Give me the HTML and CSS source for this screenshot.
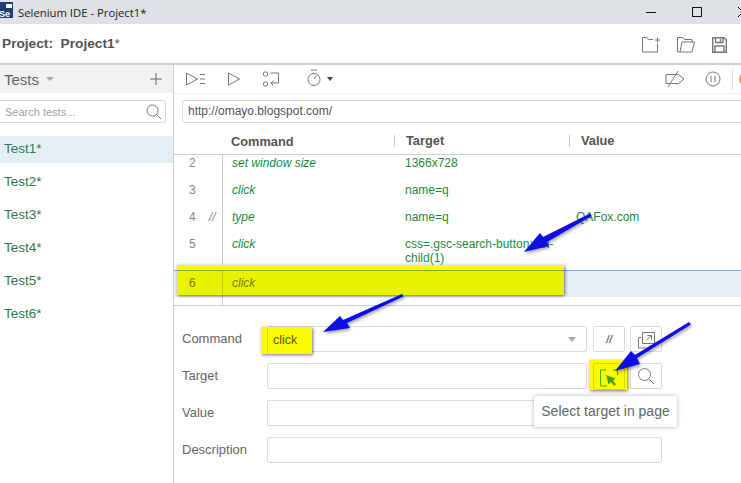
FILE: index.html
```html
<!DOCTYPE html>
<html lang="en">
<head>
<meta charset="utf-8">
<title>Selenium IDE - Project1*</title>
<link rel="stylesheet" href="styles.css">
</head>
<body>
<div class="app">
  <header class="titlebar">
    <svg class="logo" width="13" height="16" viewBox="0 0 13 16"><rect width="13" height="16" fill="#1f3f7a"/><rect x="6" y="2" width="6" height="4" fill="#fff"/><text x="-1" y="14.500" class="logo-text">Se</text></svg>
    <span class="title-text">Selenium IDE - Project1*</span>
    <div class="window-btns">
      <svg width="12" height="12" viewBox="0 0 12 12"><path d="M1 6.500H11" stroke="#111" fill="none"/></svg>
      <svg width="12" height="12" viewBox="0 0 12 12"><rect x="1.500" y="1.500" width="9" height="9" stroke="#111" fill="none"/></svg>
      <svg width="12" height="12" viewBox="0 0 12 12"><path d="M1 1L11 11M11 1L1 11" stroke="#111" fill="none"/></svg>
    </div>
  </header>
  <div class="projectbar">
    <span class="project-name">Project:&nbsp; Project1<span class="light">*</span></span>
    <div class="project-icons">
      <svg width="18" height="16" viewBox="0 0 18 16" class="ic"><path d="M11 2.500H6.500L5 .5H.5V15H15.500V7M13 3H18M15.500 .5V5.500"/></svg>
      <svg width="18" height="16" viewBox="0 0 18 16" class="ic"><path d="M3 15H.5V.5H6L7.500 2.500H15V5M3 15L5 5H17.500L15 15Z"/></svg>
      <svg width="15" height="16" viewBox="0 0 15 16" class="ic ic-save"><path d="M.7 .7H12L14.300 3V15.300H.7ZM3.500 .7V5.500H11V.7M8.500 2V4.500M3 15.300V9H12V15.300"/></svg>
    </div>
  </div>
  <div class="workspace">
    <aside class="sidebar">
      <div class="tests-head">
        <span class="tests-title">Tests</span><span class="caret"></span>
        <svg class="plus" width="14" height="14" viewBox="0 0 14 14"><path d="M7 1V13M1 7H13" stroke="#666" fill="none"/></svg>
      </div>
      <div class="search">
        <span>Search tests...</span>
        <svg width="16" height="16" viewBox="0 0 16 16" class="ic"><circle cx="6.500" cy="6.500" r="5.500"/><path d="M10.500 10.500L15 15"/></svg>
      </div>
      <ul class="tests">
        <li class="test selected">Test1*</li>
        <li class="test">Test2*</li>
        <li class="test">Test3*</li>
        <li class="test">Test4*</li>
        <li class="test">Test5*</li>
        <li class="test">Test6*</li>
      </ul>
    </aside>
    <main class="main">
      <div class="toolbar">
        <svg width="19" height="14" viewBox="0 0 19 14" class="ic"><path d="M.5 1L11.500 7L.5 13ZM14 2.500H19M14 7H19M14 11.500H19"/></svg>
        <svg width="12" height="14" viewBox="0 0 12 14" class="ic tb-play"><path d="M.5 1L11.500 7L.5 13Z"/></svg>
        <svg width="16" height="16" viewBox="0 0 16 16" class="ic tb-steps"><circle cx="2.500" cy="3" r="2.200"/><circle cx="2.500" cy="13" r="2.200"/><path d="M7.500 2H15.500V12H8M10.500 9.500L8 12L10.500 14.500"/></svg>
        <svg width="14" height="18" viewBox="0 0 14 18" class="ic tb-timer"><path d="M4 1H10M7 10L9.500 6.500"/><circle cx="7" cy="10.500" r="6"/></svg>
        <span class="mini-caret"></span>
        <div class="toolbar-right">
          <svg width="20" height="16" viewBox="0 0 20 16" class="ic"><path d="M1 3.500H13.500L19 8L13.500 12.500H1ZM13 0L3 16"/></svg>
          <svg width="16" height="16" viewBox="0 0 16 16" class="ic tb-pause"><circle cx="8" cy="8" r="7"/><path d="M6 5V11M10 5V11"/></svg>
          <span class="tb-sep"></span>
          <span class="record"></span>
        </div>
      </div>
      <div class="url-wrap"><div class="url">http://omayo.blogspot.com/</div></div>
      <div class="table-head">
        <span class="th-cmd">Command</span>
        <span class="th-target">Target</span>
        <span class="th-value">Value</span>
      </div>
      <div class="rows">
        <div class="row r-2"><span class="num">2</span><span class="cm"></span><span class="cmd">set window size</span><span class="tgt">1366x728</span><span class="val"></span></div>
        <div class="row"><span class="num">3</span><span class="cm"></span><span class="cmd">click</span><span class="tgt">name=q</span><span class="val"></span></div>
        <div class="row"><span class="num">4</span><span class="cm">//</span><span class="cmd">type</span><span class="tgt">name=q</span><span class="val">QAFox.com</span></div>
        <div class="row r-5"><span class="num">5</span><span class="cm"></span><span class="cmd">click</span><span class="tgt">css=.gsc-search-button:nth-child(1)</span><span class="val"></span></div>
        <div class="row active"><span class="num">6</span><span class="cm"></span><span class="cmd">click</span><span class="tgt"></span><span class="val"></span></div>
      </div>
      <form class="editor">
        <label class="lbl">Command</label>
        <div class="field field-cmd"><span>click</span><i class="mini-caret grey"></i></div>
        <div class="btn btn-slash">//</div>
        <div class="btn"><svg width="20" height="20" viewBox="0 0 20 20" class="ic"><path d="M6.500 3.500H18.500V14.500H6.500ZM5 8.500H2.500V19H14V16M10.500 11L15.500 6.500M11.500 6.500H15.500V10.500"/></svg></div>

        <label class="lbl">Target</label>
        <div class="field"></div>
        <div class="btn btn-select"></div>
        <div class="btn"><svg width="18" height="18" viewBox="0 0 18 18" class="ic"><circle cx="7.500" cy="7.500" r="6"/><path d="M12 12L17 17"/></svg></div>

        <label class="lbl">Value</label>
        <div class="field"></div>
        <div></div><div></div>

        <label class="lbl">Description</label>
        <div class="field field-desc"></div>
      </form>
    </main>
  </div>

  <div class="hl hl-row"><span class="hl-num">6</span><span class="hl-cmd">click</span></div>
  <div class="hl hl-click"><span class="hl-click-text">click</span></div>
  <div class="hl hl-select"><div class="hl-select-btn"><svg width="18" height="18" viewBox="0 0 18 18"><path d="M6 1H.5V17H7M13 1H17.500V6" stroke="#4aa318" fill="none"/><path d="M6 6L15.500 9.500L13 11.500L16 15.500L14 17L11 13L8.500 15.500Z" fill="#4aa318"/></svg></div></div>
  <div class="tooltip">Select target in page</div>

  <svg class="arrows" width="741" height="483" viewBox="0 0 741 483">
    <defs>
      <filter id="sh" x="-20%" y="-20%" width="140%" height="140%"><feDropShadow dx="1" dy="2" stdDeviation="1.500" flood-color="#000" flood-opacity=".35"/></filter>
    </defs>
    <g filter="url(#sh)" fill="#0a0ae6">
      <path d="M590 213.500L591.500 216L547 242L549 246L524 252L540 233L543 237Z"/>
      <path d="M402 294L403.500 296.500L347 323L350 328L323 332L340 316L343 320Z"/>
      <path d="M689 322L691 324.500L637 358L640 364L615 371L631 351L635 355Z"/>
    </g>
  </svg>
</div>
</body>
</html>
```

FILE: styles.css
```css
* { box-sizing: border-box; }
html, body { margin: 0; padding: 0; background: #fff; }
body { font-family: "Liberation Sans", Arial, sans-serif; font-size: 12px; color: #555; }
.app { position: relative; width: 741px; height: 483px; overflow: hidden; display: flex; flex-direction: column; }

.titlebar { height: 24px; flex: none; background: #dee1e6; display: flex; align-items: center; }
.logo { flex: none; margin-top: -4px; }
.logo-text { font: bold 9px "Liberation Sans", sans-serif; fill: #fff; }
.title-text { font-family: "Open Sans", sans-serif; font-size: 11.300px; color: #222; margin-left: 5px; }
.window-btns { margin-left: auto; display: flex; gap: 34px; margin-right: -8px; }

.projectbar { height: 41px; flex: none; display: flex; align-items: center; justify-content: space-between; padding: 0 14px 0 2px; border-bottom: 2px solid #d0d0d0; }
.project-name { font-weight: bold; font-size: 13.700px; color: #555; }
.light { font-weight: normal; }
.project-icons { display: flex; gap: 17px; align-items: center; margin-top: 2px; }
.ic { fill: none; stroke: #777; stroke-width: 1; flex: none; }
.ic-save { stroke-width: 1.400; }

.workspace { flex: 1; display: flex; min-height: 0; }
.sidebar { width: 174px; flex: none; border-right: 1px solid #d0d0d0; }
.tests-head { height: 28px; background: #f1f1f1; display: flex; align-items: center; padding: 0 10px 0 4px; }
.tests-title { font-size: 15px; color: #666; }
.caret { width: 0; height: 0; border: 4px solid transparent; border-top-color: #aaa; border-bottom: 0; margin-left: 7px; }
.plus { margin-left: auto; }
.search { margin: 7px 7px 0 -2px; height: 23px; border: 1px solid #d9d9d9; border-radius: 2px; display: flex; align-items: center; justify-content: space-between; padding: 0 3px 0 6px; color: #a0a0a0; font-size: 11px; }
.tests { list-style: none; margin: 13px 0 0; padding: 0; }
.test { height: 33px; padding: 1px 0 0 4px; font-size: 13.500px; line-height: 24px; color: #31794a; }
.test.selected { background: #e6eef5; height: 27px; margin-bottom: 6px; }

.main { flex: 1; min-width: 0; display: flex; flex-direction: column; }
.toolbar { height: 29px; flex: none; display: flex; align-items: center; padding-left: 12px; border-bottom: 1px solid #eee; }
.tb-play { margin-left: 23px; }
.tb-steps { margin-left: 23px; }
.tb-timer { margin-left: 28px; margin-top: -2px; }
.mini-caret { width: 0; height: 0; border: 3.500px solid transparent; border-top: 4px solid #444; border-bottom: 0; margin-left: 6px; }
.mini-caret.grey { border-top-color: #aaa; border-width: 5px 4.500px 0; }
.toolbar-right { margin-left: auto; display: flex; align-items: center; margin-right: -12px; }
.tb-pause { margin-left: 20px; }
.tb-sep { width: 1px; height: 22px; background: #e4e4e4; margin-left: 11px; }
.record { width: 14px; height: 14px; border-radius: 50%; border: 2px solid #f88; margin-left: 6px; }

.url-wrap { padding: 6px 0 0 8px; }
.url { height: 23px; margin-right: -10px; border: 1px solid #d9d9d9; border-radius: 2px; padding: 0 5px; line-height: 20px; font-size: 12px; color: #555; }

.table-head { height: 32px; flex: none; display: grid; grid-template-columns: 163px 175px 1fr; align-items: center; font-weight: bold; font-size: 12.800px; color: #555; border-bottom: 1px solid #d0d0d0; padding: 5px 0 0 57px; }
.th-target, .th-value { border-left: 1px solid #ccc; padding-left: 11px; line-height: 12px; }

.rows { height: 151px; flex: none; border-bottom: 1px solid #d0d0d0; font-size: 12px; color: #1c8c3c; background: linear-gradient(#ccc, #ccc) 48px 0 / 1px 100% no-repeat; }
.row { display: grid; grid-template-columns: 36px 8px 183px 177px 1fr; height: 27px; padding-top: 7px; line-height: 14px; align-items: start; }
.r-2 { height: 21px; padding-top: 1px; }
.r-5 { height: 40px; }
.num { color: #888; padding-left: 15px; }
.cm { color: #888; font-style: italic; margin-left: -1px; }
.cmd { font-style: italic; padding-left: 14px; }
.tgt { padding: 0 2px 0 4px; margin-right: 6px; }
.val { padding-left: 6px; margin-left: -8px; }
.active { background: linear-gradient(#ccc, #ccc) 48px 0 / 1px 100% no-repeat, #e6eef5; border-top: 1px solid #6fb6f2; padding-top: 5px; color: #333; }

.editor { display: grid; grid-template-columns: 85px 320px 38px 37px; grid-auto-rows: 26px; row-gap: 11px; padding: 20px 0 0 8px; }
.lbl { font-size: 13px; color: #666; align-self: center; margin-top: -2px; }
.field { border: 1px solid #dcdcdc; border-radius: 2px; display: flex; align-items: center; justify-content: space-between; padding: 0 10px 0 6px; }
.field-cmd span { visibility: hidden; }
.field-desc { grid-column: span 3; width: 395px; }
.btn { width: 32px; height: 26px; border: 1px solid #dcdcdc; border-radius: 2px; display: flex; align-items: center; justify-content: center; }
.btn + .btn { margin-left: 5px; }
.btn-slash, .btn-select { margin-left: 6px; }
.btn-slash { font-style: italic; font-weight: bold; color: #777; font-size: 11px; }

.hl { position: absolute; box-shadow: 1px 1px 3px rgba(0,0,0,.55); }
.hl-row { left: 177px; top: 265px; width: 387px; height: 30px; padding-top: 6px; background: linear-gradient(#ffff00, #ffff00) 0 0 / 100% 5px no-repeat, linear-gradient(#7fb02a, #7fb02a) 0 5px / 100% 1px no-repeat, linear-gradient(#c0c600, #c0c600) 45px 0 / 1px 100% no-repeat, #e9f200; font-size: 12px; font-style: italic; color: #7a7a00; display: flex; align-items: center; }
.hl-num { font-style: normal; padding-left: 12px; width: 55px; }
.hl-click { left: 261px; top: 327px; width: 51px; height: 27px; background: linear-gradient(#dede00, #dede00) 6px 0 / 1px 100% no-repeat, #fcfc00; color: #5a5a00; font-size: 12.500px; line-height: 26px; padding-left: 12px; }
.hl-select { left: 589px; top: 360px; width: 38px; height: 30px; background: #fcfc00; padding: 3px 0 0 4px; }
.hl-select-btn { width: 32px; height: 27px; border: 1px solid #d8d800; border-radius: 2px; display: flex; align-items: center; justify-content: center; padding-top: 2px; }
.tooltip { position: absolute; left: 534px; top: 396px; width: 143px; height: 31px; background: #fff; box-shadow: 0 0 4px rgba(0,0,0,.3); border-radius: 2px; font-size: 14px; color: #666; line-height: 30px; text-align: center; white-space: nowrap; }
.arrows { position: absolute; left: 0; top: 0; pointer-events: none; }
```
